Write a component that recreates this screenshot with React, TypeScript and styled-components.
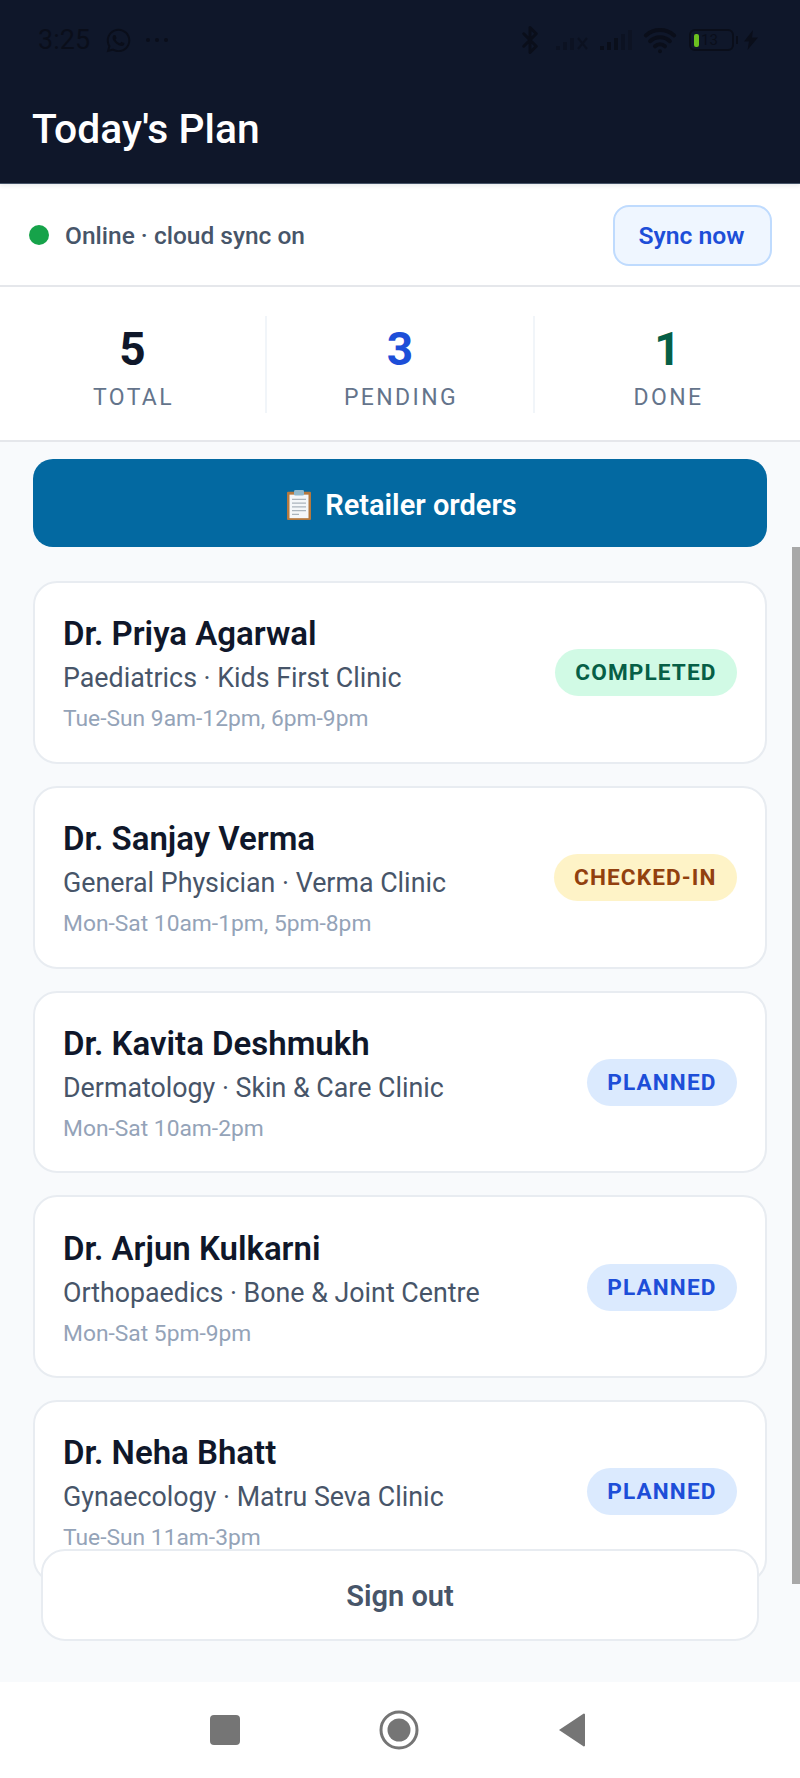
import styled, { createGlobalStyle } from "styled-components";
import { FaWhatsapp } from "react-icons/fa";
import { Bluetooth, Wifi } from "lucide-react";

const GlobalStyle = createGlobalStyle`
  html, body {
    margin: 0;
    padding: 0;
    background: #f8fafc;
  }

  * {
    box-sizing: border-box;
  }

  body {
    font-family: Roboto, "Liberation Sans", sans-serif;
  }
`;

const Screen = styled.div`
  width: 800px;
  height: 1778px;
  display: flex;
  flex-direction: column;
  overflow: hidden;
`;

const Header = styled.header`
  position: relative;
  height: 184px;
  flex-shrink: 0;
  background: #0f172a;
  border-bottom: 1px solid #475569;
  box-shadow: 0 2px 4px rgba(15, 23, 42, 0.08);
`;

const StatusBar = styled.div`
  height: 80px;
  padding: 0 42px 0 38px;
  display: flex;
  align-items: center;
  justify-content: space-between;
  color: #0a0e1a;
`;

const StatusSide = styled.div`
  display: flex;
  align-items: center;
`;

const Clock = styled.span`
  font-size: 27px;
  width: 67px;
`;

const Dots = styled.span`
  margin-left: 14px;
  display: flex;
  gap: 5px;
`;

const Dot = styled.i`
  width: 4px;
  height: 4px;
  border-radius: 50%;
  background: #0a0e1a;
`;

const SignalIcon = styled.svg`
  margin-left: 10px;
`;

const Battery = styled.div`
  position: relative;
  width: 45px;
  height: 22px;
  margin-left: 12px;
  padding-left: 3px;
  border: 2px solid #0a0e1a;
  border-radius: 6px;
  display: flex;
  align-items: center;
  gap: 2px;
  font-size: 15px;

  &::after {
    content: "";
    position: absolute;
    right: -6px;
    top: 5px;
    width: 2px;
    height: 8px;
    background: #0a0e1a;
  }
`;

const BatteryFill = styled.i`
  width: 5px;
  height: 13px;
  border-radius: 2px;
  background: #6bbf1f;
`;

const Title = styled.h1`
  margin: 25px 0 0 32px;
  font-size: 40.8px;
  line-height: 48px;
  font-weight: 500;
  color: #fff;
`;

const SyncRow = styled.div`
  height: 103px;
  flex-shrink: 0;
  padding: 1px 28px 0 29px;
  background: #fff;
  border-bottom: 2px solid #e5e7eb;
  display: flex;
  align-items: center;
  justify-content: space-between;
`;

const SyncStatus = styled.div`
  display: flex;
  align-items: center;
  gap: 16px;
  font-size: 24.5px;
  font-weight: 500;
  color: #475569;
`;

const OnlineDot = styled.span`
  width: 20px;
  height: 20px;
  border-radius: 50%;
  background: #16a34a;
`;

const SyncButton = styled.button`
  width: 159px;
  height: 61px;
  padding: 0 2px 0 0;
  border: 2px solid #bfdbfe;
  border-radius: 16px;
  background: #eff6ff;
  color: #1d4ed8;
  font: 600 24.7px Roboto, sans-serif;
`;

const Stats = styled.section`
  height: 155px;
  flex-shrink: 0;
  padding: 29px 0 27px;
  background: #fff;
  border-bottom: 2px solid #e5e7eb;
  display: grid;
  grid-template-columns: 267px 268px 265px;
`;

const Stat = styled.div<{ $divided?: boolean }>`
  padding-top: 7px;
  border-right: ${(p) => (p.$divided ? "2px solid #f1f5f9" : "none")};
  display: flex;
  flex-direction: column;
  align-items: center;
`;

const StatValue = styled.div<{ $color: string }>`
  font-size: 46px;
  line-height: 52px;
  font-weight: 700;
  color: ${(p) => p.$color};
`;

const StatLabel = styled.div`
  margin-top: 9px;
  padding-left: 2px;
  font-size: 23px;
  line-height: 28px;
  letter-spacing: 2.4px;
  color: #64748b;
`;

const Main = styled.main`
  position: relative;
  flex: 1;
  min-height: 0;
  overflow: hidden;
  padding: 17px 33px 0;
  background: #f8fafc;
`;

const OrdersButton = styled.button`
  width: 100%;
  height: 88px;
  padding: 4px 0 0 3px;
  border: none;
  border-radius: 20px;
  background: #0369a1;
  color: #fff;
  font: 600 29px Roboto, sans-serif;
  display: flex;
  align-items: center;
  justify-content: center;
  gap: 13px;
`;

const CardList = styled.div`
  margin-top: 34px;
  display: flex;
  flex-direction: column;
  gap: 22px;
`;

const Card = styled.article`
  height: 182.75px;
  flex-shrink: 0;
  padding: 3px 28px 0 28px;
  background: #fff;
  border: 2px solid #e8ecf1;
  border-radius: 24px;
  display: flex;
  align-items: center;
  justify-content: space-between;
`;

const CardText = styled.div`
  padding-top: 2px;
`;

const Name = styled.div`
  font-size: 33px;
  line-height: 38px;
  font-weight: 600;
  color: #0f172a;
`;

const Speciality = styled.div`
  margin-top: 8px;
  font-size: 26.8px;
  line-height: 34px;
  color: #475569;
`;

const Hours = styled.div`
  margin-top: 9px;
  font-size: 22.8px;
  line-height: 30px;
  color: #94a3b8;
`;

const tones = {
  completed: { bg: "#d1fae5", fg: "#065f46" },
  checked: { bg: "#fef3c7", fg: "#92400e" },
  planned: { bg: "#dbeafe", fg: "#1d4ed8" },
};

type Tone = keyof typeof tones;

const Badge = styled.span<{ $tone: Tone }>`
  height: 47px;
  margin-bottom: 2px;
  padding: 0 20.5px;
  border-radius: 24px;
  background: ${(p) => tones[p.$tone].bg};
  color: ${(p) => tones[p.$tone].fg};
  font-size: 22.6px;
  font-weight: 700;
  letter-spacing: 1.1px;
  display: flex;
  align-items: center;
`;

const Scrollbar = styled.div`
  position: absolute;
  top: 105px;
  right: 0;
  width: 8px;
  height: 1037px;
  background: #a8a8a8;
`;

const SignOut = styled.button`
  position: absolute;
  left: 41px;
  right: 41px;
  top: 1107px;
  height: 92px;
  padding-top: 2px;
  border: 2px solid #e8ecf1;
  border-radius: 24px;
  background: #fff;
  color: #475569;
  font: 600 29px Roboto, sans-serif;
`;

const NavBar = styled.nav`
  height: 96px;
  flex-shrink: 0;
  padding: 0 2px 0 0;
  background: #fff;
  display: flex;
  align-items: center;
  justify-content: center;
`;

const NavSlot = styled.div`
  width: 174.5px;
  display: flex;
  justify-content: center;
`;

const BackIcon = styled.svg`
  margin-right: 3px;
`;

const doctors: { name: string; info: string; hours: string; status: string; tone: Tone }[] = [
  { name: "Dr. Priya Agarwal", info: "Paediatrics · Kids First Clinic", hours: "Tue-Sun 9am-12pm, 6pm-9pm", status: "COMPLETED", tone: "completed" },
  { name: "Dr. Sanjay Verma", info: "General Physician · Verma Clinic", hours: "Mon-Sat 10am-1pm, 5pm-8pm", status: "CHECKED-IN", tone: "checked" },
  { name: "Dr. Kavita Deshmukh", info: "Dermatology · Skin & Care Clinic", hours: "Mon-Sat 10am-2pm", status: "PLANNED", tone: "planned" },
  { name: "Dr. Arjun Kulkarni", info: "Orthopaedics · Bone & Joint Centre", hours: "Mon-Sat 5pm-9pm", status: "PLANNED", tone: "planned" },
  { name: "Dr. Neha Bhatt", info: "Gynaecology · Matru Seva Clinic", hours: "Tue-Sun 11am-3pm", status: "PLANNED", tone: "planned" },
];

const Signal = ({ crossed }: { crossed?: boolean }) => (
  <SignalIcon width="34" height="22" viewBox="0 0 34 22" fill="#0a0e1a">
    <rect x="1" y="17" width="4" height="4" opacity={crossed ? 0.5 : 1} />
    <rect x="8" y="13" width="4" height="8" opacity={crossed ? 0.5 : 1} />
    <rect x="15" y="9" width="4" height="12" opacity={crossed ? 0.5 : 0.9} />
    {!crossed && <rect x="22" y="5" width="4" height="16" opacity="0.5" />}
    {!crossed && <rect x="29" y="1" width="4" height="20" opacity="0.4" />}
    {crossed && <path d="M23 9l9 11M32 9l-9 11" stroke="#0a0e1a" strokeWidth="2" opacity="0.6" />}
  </SignalIcon>
);

const ClipboardIcon = () => (
  <svg width="26" height="32" viewBox="0 0 26 34" preserveAspectRatio="none">
    <rect x="1" y="3" width="24" height="30" rx="1" fill="#b5793f" />
    <rect x="3.5" y="6" width="19" height="25" fill="#f4f7f9" />
    <rect x="8" y="1" width="10" height="6" rx="1.5" fill="#8fb8cc" />
    <path d="M6 11h14M6 15h14M6 19h14M6 23h14M6 27h7" stroke="#a9b4bc" strokeWidth="1.2" />
  </svg>
);

const App = () => {
  return (
    <Screen>
      <GlobalStyle />
      <Header>
        <StatusBar>
          <StatusSide>
            <Clock>3:25</Clock>
            <FaWhatsapp size={27} />
            <Dots>
              <Dot />
              <Dot />
              <Dot />
            </Dots>
          </StatusSide>
          <StatusSide>
            <Bluetooth size={30} strokeWidth={2.4} />
            <Signal crossed />
            <Signal />
            <Wifi size={34} strokeWidth={2.8} style={{ marginLeft: 10 }} />
            <Battery>
              <BatteryFill />
              13
            </Battery>
            <svg width="14" height="20" viewBox="0 0 14 20" fill="#0a0e1a" style={{ marginLeft: 10 }}>
              <path d="M9 0L0 11.5h5L3.5 20 14 7.5H8z" />
            </svg>
          </StatusSide>
        </StatusBar>
        <Title>Today's Plan</Title>
      </Header>

      <SyncRow>
        <SyncStatus>
          <OnlineDot />
          Online · cloud sync on
        </SyncStatus>
        <SyncButton>Sync now</SyncButton>
      </SyncRow>

      <Stats>
        <Stat $divided>
          <StatValue $color="#0f172a">5</StatValue>
          <StatLabel>TOTAL</StatLabel>
        </Stat>
        <Stat $divided>
          <StatValue $color="#1d4ed8">3</StatValue>
          <StatLabel>PENDING</StatLabel>
        </Stat>
        <Stat>
          <StatValue $color="#065f46">1</StatValue>
          <StatLabel>DONE</StatLabel>
        </Stat>
      </Stats>

      <Main>
        <OrdersButton>
          <ClipboardIcon />
          Retailer orders
        </OrdersButton>
        <CardList>
          {doctors.map((doctor) => (
            <Card key={doctor.name}>
              <CardText>
                <Name>{doctor.name}</Name>
                <Speciality>{doctor.info}</Speciality>
                <Hours>{doctor.hours}</Hours>
              </CardText>
              <Badge $tone={doctor.tone}>{doctor.status}</Badge>
            </Card>
          ))}
        </CardList>
        <Scrollbar />
        <SignOut>Sign out</SignOut>
      </Main>

      <NavBar>
        <NavSlot>
          <svg width="30" height="30" viewBox="0 0 30 30">
            <rect width="30" height="30" rx="4" fill="#757575" />
          </svg>
        </NavSlot>
        <NavSlot>
          <svg width="40" height="40" viewBox="0 0 40 40">
            <circle cx="20" cy="20" r="18" fill="none" stroke="#757575" strokeWidth="3" />
            <circle cx="20" cy="20" r="11.5" fill="#757575" />
          </svg>
        </NavSlot>
        <NavSlot>
          <BackIcon width="28" height="34" viewBox="0 0 28 34">
            <path d="M27 1.5v31a1 1 0 0 1-1.6.7L1 17 25.4.8a1 1 0 0 1 1.6.7z" fill="#757575" />
          </BackIcon>
        </NavSlot>
      </NavBar>
    </Screen>
  );
};

export default App;
